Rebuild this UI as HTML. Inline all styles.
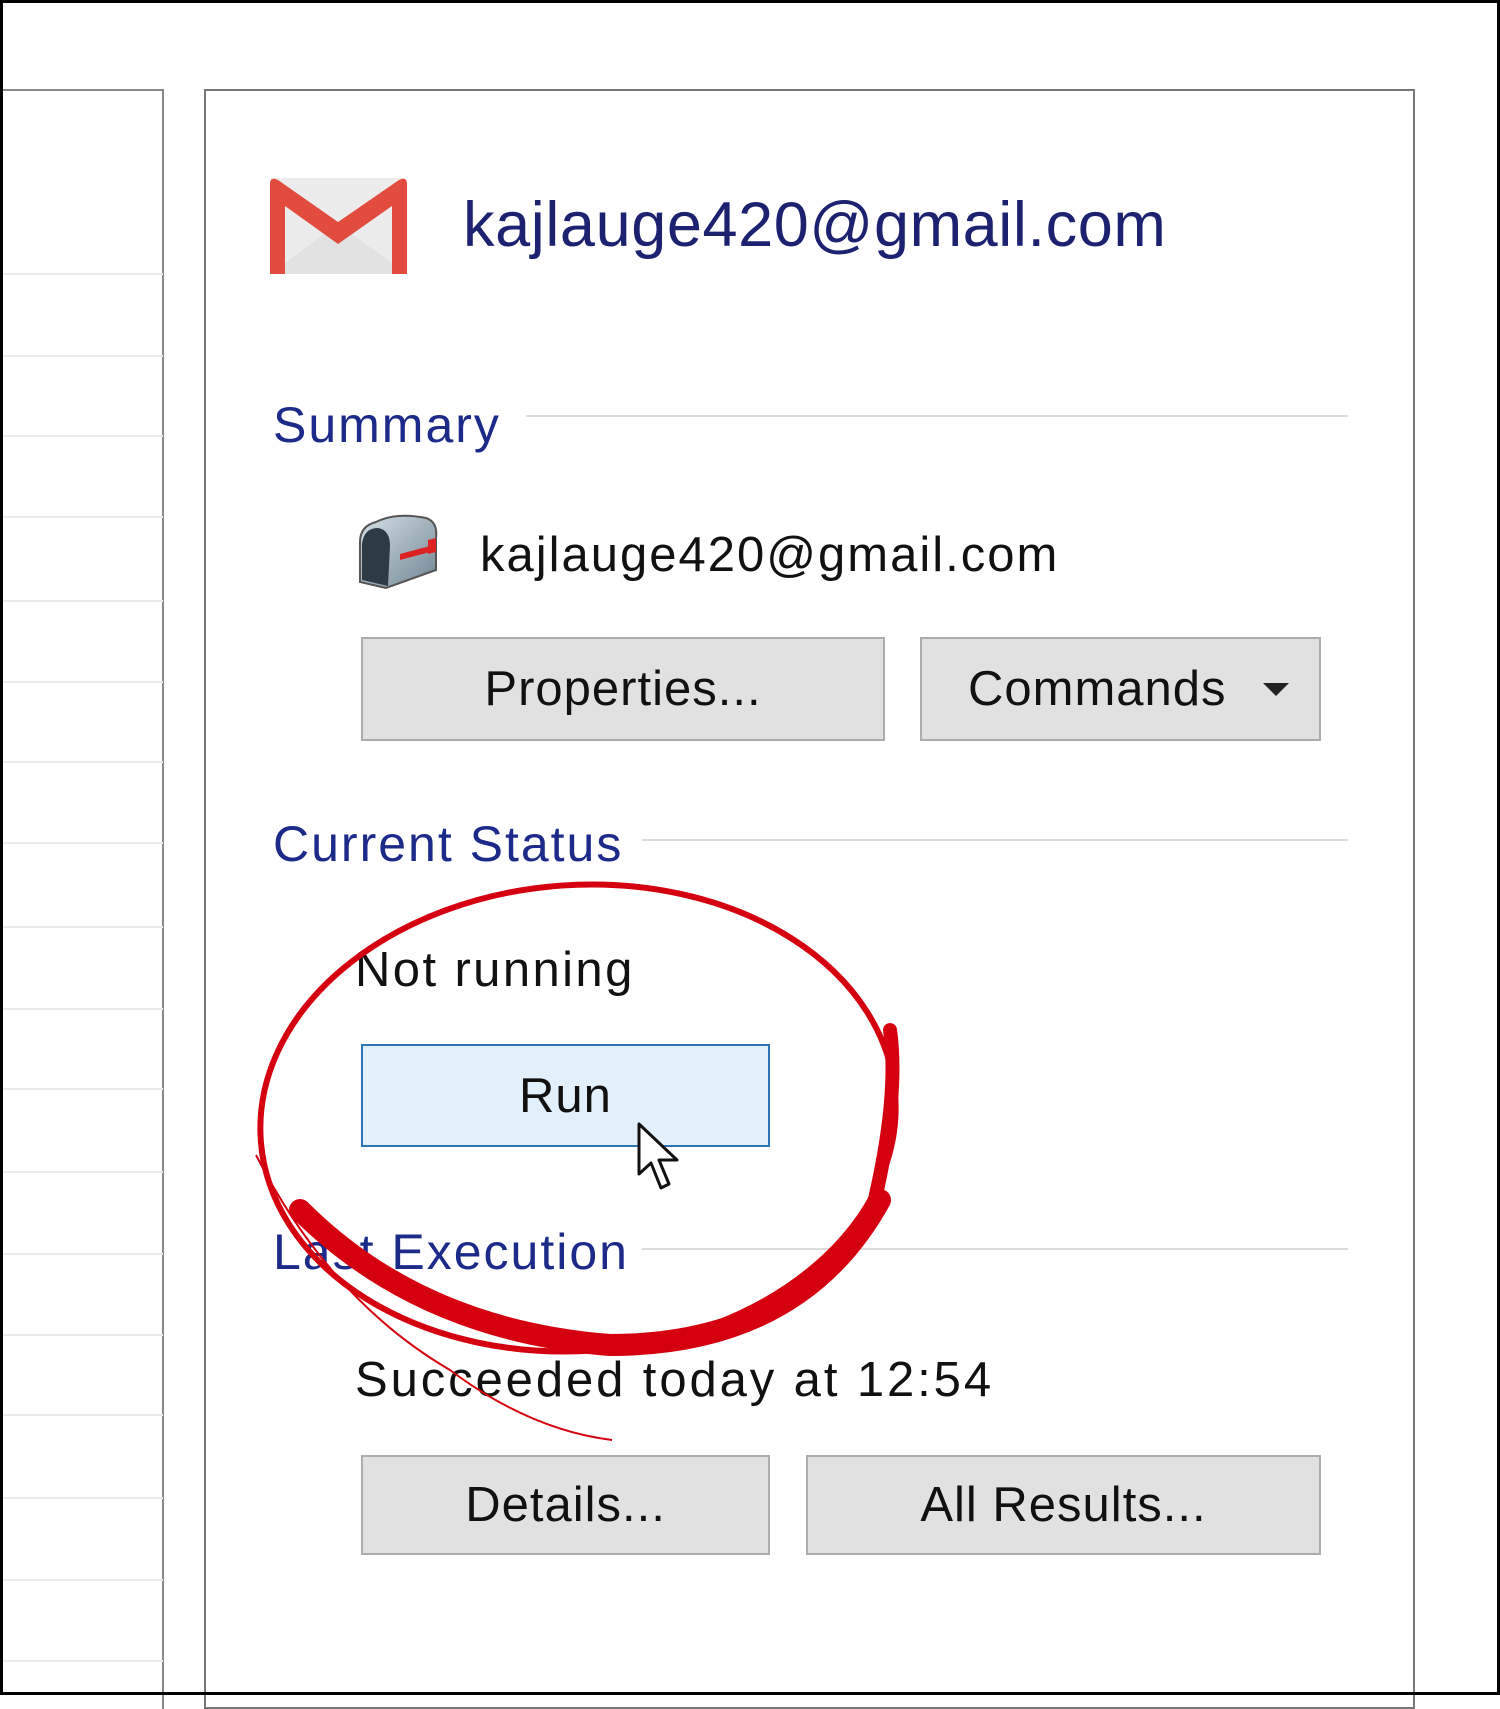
<!DOCTYPE html>
<html><head><meta charset="utf-8"><style>
html,body{margin:0;padding:0}
body{width:1500px;height:1695px;position:relative;overflow:hidden;background:#fff;font-family:"Liberation Sans",sans-serif}
.a{position:absolute;white-space:nowrap;line-height:1}
.h{color:#1c2a8a;font-size:50px;letter-spacing:2px}
.t{color:#111;font-size:49px;letter-spacing:2px}
.btn{position:absolute;background:#e1e1e1;border:2px solid #adadad;box-sizing:border-box;display:flex;align-items:center;justify-content:center;font-size:49px;color:#111;letter-spacing:1px}
.ln{position:absolute;height:2px;background:#dcdcdc}
.hl{position:absolute;left:3px;width:160px;height:2px;background:#eaeaea}
</style></head><body>
<div style="position:absolute;inset:0;border:3px solid #000;box-sizing:border-box;z-index:5;pointer-events:none"></div>
<div style="position:absolute;left:0;top:89px;width:164px;height:1620px;border-top:2px solid #888;border-right:2px solid #888;box-sizing:border-box"></div>
<div class="hl" style="top:273px"></div><div class="hl" style="top:355px"></div><div class="hl" style="top:435px"></div><div class="hl" style="top:516px"></div><div class="hl" style="top:600px"></div><div class="hl" style="top:681px"></div><div class="hl" style="top:761px"></div><div class="hl" style="top:842px"></div><div class="hl" style="top:926px"></div><div class="hl" style="top:1008px"></div><div class="hl" style="top:1088px"></div><div class="hl" style="top:1171px"></div><div class="hl" style="top:1253px"></div><div class="hl" style="top:1334px"></div><div class="hl" style="top:1414px"></div><div class="hl" style="top:1497px"></div><div class="hl" style="top:1579px"></div><div class="hl" style="top:1660px"></div>
<div style="position:absolute;left:204px;top:89px;width:1211px;height:1620px;border:2px solid #777;box-sizing:border-box"></div>
<svg class="a" style="left:266px;top:174px" width="145" height="104" viewBox="0 0 145 104">
<rect x="4" y="4" width="137" height="96" rx="5" fill="#ececec"/>
<path d="M4 100 L72 50 L141 100 Z" fill="#e2e2e2"/>
<path d="M4 10 Q4 2 12 6 L72 48 L133 6 Q141 2 141 10 L141 100 L126 100 L126 32 L72 70 L19 32 L19 100 L4 100 Z" fill="#e14c3e"/>
</svg>
<div class="a" style="left:463px;top:194px;font-size:63px;color:#1c2270;letter-spacing:0.6px">kajlauge420@gmail.com</div>
<div class="a h" style="left:273px;top:400px">Summary</div>
<div class="ln" style="left:526px;top:415px;width:822px"></div>
<svg class="a" style="left:356px;top:512px" width="84" height="82" viewBox="0 0 84 82">
<defs><linearGradient id="g" x1="0" y1="0" x2="1" y2="1"><stop offset="0" stop-color="#d7e1e8"/><stop offset="1" stop-color="#6f8592"/></linearGradient></defs>
<path d="M20 10 Q40 0 70 6 Q82 10 80 26 L80 58 L30 76 L4 70 L4 30 Q4 14 20 10Z" fill="url(#g)" stroke="#555" stroke-width="2"/>
<path d="M6 32 Q8 16 22 16 Q34 18 34 34 L32 74 L6 68Z" fill="#2d3b44"/>
<path d="M44 42 L74 34 L74 40 L44 48Z" fill="#d22"/>
<path d="M72 28 L80 26 L80 40 L72 42Z" fill="#d22"/>
</svg>
<div class="a t" style="left:480px;top:531px;letter-spacing:2px">kajlauge420@gmail.com</div>
<div class="btn" style="left:361px;top:637px;width:524px;height:104px">Properties...</div>
<div class="btn" style="left:920px;top:637px;width:401px;height:104px;justify-content:flex-start;padding-left:46px">Commands<span style="position:absolute;right:30px;top:44px;border-left:13px solid transparent;border-right:13px solid transparent;border-top:13px solid #222"></span></div>
<div class="a h" style="left:273px;top:819px">Current Status</div>
<div class="ln" style="left:642px;top:839px;width:706px"></div>
<div class="a t" style="left:355px;top:946px;letter-spacing:2.4px">Not running</div>
<div class="btn" style="left:361px;top:1044px;width:409px;height:103px;background:#e1f0fa;border-color:#2f74b5">Run</div>
<div class="a h" style="left:273px;top:1227px">Last Execution</div>
<div class="ln" style="left:642px;top:1248px;width:706px"></div>
<div class="a t" style="left:355px;top:1356px;letter-spacing:2.9px">Succeeded today at 12:54</div>
<div class="btn" style="left:361px;top:1455px;width:409px;height:100px">Details...</div>
<div class="btn" style="left:806px;top:1455px;width:515px;height:100px">All Results...</div>
<svg class="a" style="left:0;top:0" width="1500" height="1695" viewBox="0 0 1500 1695">
<ellipse cx="578" cy="1118" rx="318" ry="233" fill="none" stroke="#d40010" stroke-width="6" transform="rotate(-4 578 1118)"/>
<path d="M300 1210 Q420 1330 610 1345 Q800 1345 880 1200" fill="none" stroke="#d40010" stroke-width="22" stroke-linecap="round"/>
<path d="M870 1220 Q900 1100 890 1030" fill="none" stroke="#d40010" stroke-width="14" stroke-linecap="round"/>
<path d="M256 1155 Q330 1300 450 1370 Q530 1430 612 1440" fill="none" stroke="#d40010" stroke-width="2"/>
</svg>
<svg class="a" style="left:637px;top:1122px" width="48" height="76" viewBox="0 0 48 76">
<path d="M2 2 L2 52 L14 41 L24 66 L32 62 L22 38 L40 38 Z" fill="#fff" stroke="#111" stroke-width="3" stroke-linejoin="round"/>
</svg>
</body></html>
